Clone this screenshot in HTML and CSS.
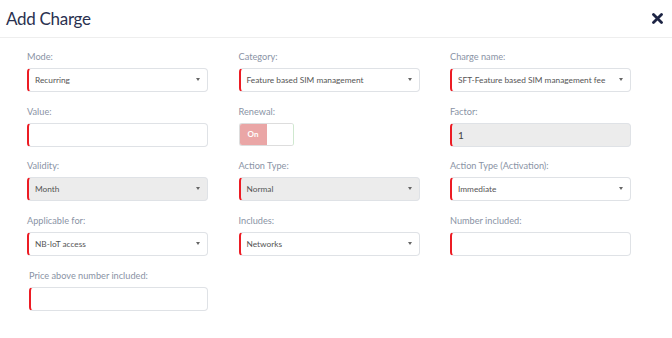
FILE: index.html
```html
<!DOCTYPE html>
<html lang="en">
<head>
    <meta charset="UTF-8">
    <meta name="viewport" content="width=device-width, initial-scale=1.0">
    <title>Add Charge</title>
    <link rel="stylesheet" href="styles.css">
</head>
<body>
    <!-- Шапка окна -->
    <div class="modal-header">
        <h1 class="modal-title">Add Charge</h1>
        <span class="close-btn">
            <svg width="11" height="11" viewBox="0 0 11 11">
                <path d="M1.5 1.5 L9.5 9.5 M9.5 1.5 L1.5 9.5" stroke="#1d2444" stroke-width="2.8" stroke-linecap="round"/>
            </svg>
        </span>
    </div>

    <!-- Форма -->
    <div class="modal-body">
        <div class="field">
            <label>Mode:</label>
            <div class="control select">Recurring</div>
        </div>
        <div class="field">
            <label>Category:</label>
            <div class="control select">Feature based SIM management</div>
        </div>
        <div class="field">
            <label>Charge name:</label>
            <div class="control select">SFT-Feature based SIM management fee</div>
        </div>

        <div class="field">
            <label>Value:</label>
            <div class="control"></div>
        </div>
        <div class="field">
            <label>Renewal:</label>
            <div class="toggle">
                <span class="toggle-on">On</span>
                <span class="toggle-off"></span>
            </div>
        </div>
        <div class="field">
            <label>Factor:</label>
            <div class="control disabled value">1</div>
        </div>

        <div class="field">
            <label>Validity:</label>
            <div class="control select disabled">Month</div>
        </div>
        <div class="field">
            <label>Action Type:</label>
            <div class="control select disabled">Normal</div>
        </div>
        <div class="field">
            <label>Action Type (Activation):</label>
            <div class="control select">Immediate</div>
        </div>

        <div class="field">
            <label>Applicable for:</label>
            <div class="control select">NB-IoT access</div>
        </div>
        <div class="field">
            <label>Includes:</label>
            <div class="control select">Networks</div>
        </div>
        <div class="field">
            <label>Number included:</label>
            <div class="control"></div>
        </div>

        <div class="field shifted">
            <label>Price above number included:</label>
            <div class="control"></div>
        </div>
    </div>
</body>
</html>
```

FILE: styles.css
```css
body {
    font-family: Lato, "Open Sans", sans-serif;
    background-color: #fff;
    margin: 0;
    padding: 0;
    color: #555;
}

.modal-header {
    display: flex;
    align-items: center;
    justify-content: space-between;
    height: 37px;
    padding: 0 8px 0 6px;
    border-bottom: 1px solid #eeeeee;
}

.modal-title {
    margin: 0;
    font-size: 17px;
    font-weight: 400;
    color: #2a3150;
    letter-spacing: -0.3px;
}

.close-btn {
    display: flex;
    margin-right: 1px;
}

.modal-body {
    display: grid;
    grid-template-columns: repeat(3, 181px);
    column-gap: 30.5px;
    row-gap: 12.5px;
    padding: 12px 0 0 27px;
}

.field label {
    display: block;
    font-size: 9.2px;
    line-height: 13px;
    color: #8a93a5;
    margin-bottom: 5px;
}

.field.shifted {
    margin-left: 2px;
    margin-top: 1px;
}

.control {
    position: relative;
    box-sizing: border-box;
    height: 24px;
    border: 1px solid #dfe2e6;
    border-left: 2px solid #ec1c24;
    border-radius: 4px;
    background-color: #fff;
    padding: 0 16px 0 6px;
    font-size: 8.3px;
    line-height: 22px;
    color: #555;
    white-space: nowrap;
    overflow: hidden;
}

.control.disabled {
    background-color: #ececec;
}

.control.value {
    font-size: 10px;
    color: #444;
}

/* стрелка выпадающего списка */
.select::after {
    content: "";
    position: absolute;
    right: 7px;
    top: 9px;
    border-left: 2.5px solid transparent;
    border-right: 2.5px solid transparent;
    border-top: 3px solid #666;
}

.toggle {
    display: flex;
    box-sizing: border-box;
    width: 55px;
    height: 23px;
    border: 1px solid #dddddd;
    border-right-color: #cfe8cf;
    border-radius: 3px;
    overflow: hidden;
}

.toggle-on {
    width: 27px;
    background-color: #eaa6a6;
    color: #fff;
    font-size: 8px;
    font-weight: bold;
    display: flex;
    align-items: center;
    justify-content: center;
}

.toggle-off {
    flex: 1;
    background-color: #fff;
}
```
